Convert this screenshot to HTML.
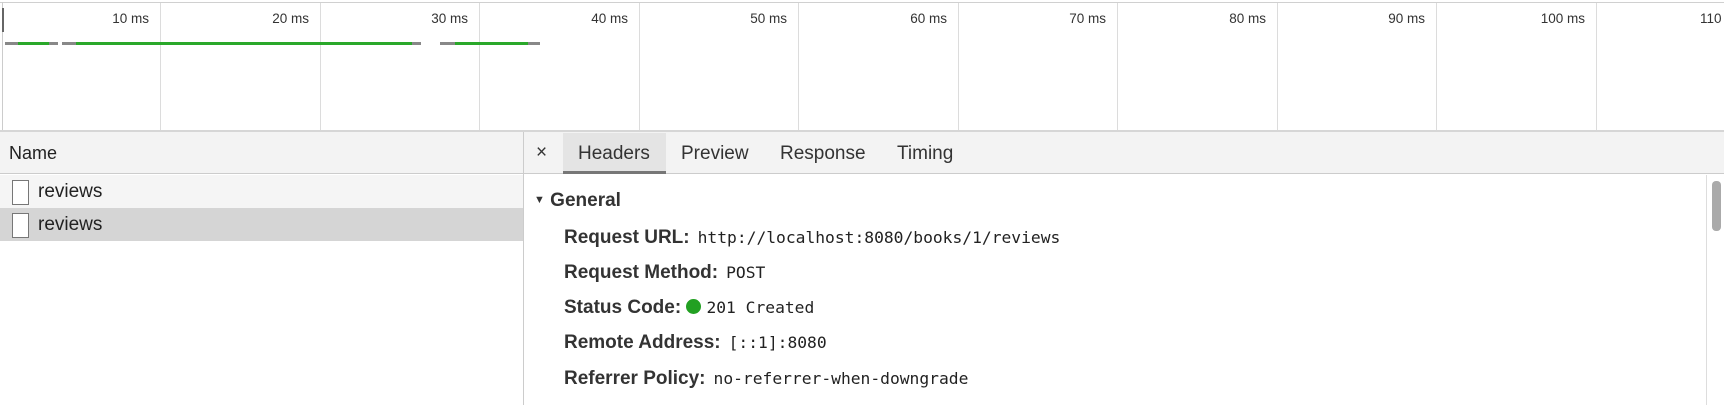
<!DOCTYPE html>
<html><head><style>
*{margin:0;padding:0;box-sizing:border-box}
body{width:1724px;height:405px;background:#fff;position:relative;overflow:hidden;font-family:"Liberation Sans",sans-serif;color:#222}
.a{position:absolute}
.vl{position:absolute;top:3px;height:127px;width:1px;background:#dcdcdc}
.tl{position:absolute;top:9px;font-size:13.5px;line-height:20px;color:#333;text-align:right;width:90px}
.lab{position:absolute;left:564px;font-size:19px;line-height:22px;font-weight:bold;color:#333;white-space:nowrap}
.val{font-family:"DejaVu Sans Mono","Liberation Mono",monospace;font-weight:normal;font-size:16.3px;margin-left:8px;color:#222}
.tab{position:absolute;top:143px;font-size:19px;line-height:22px;color:#333}
</style></head><body>
<div class="a" style="left:0;top:2px;width:1724px;height:1px;background:#d0d0d0"></div>
<div class="a" style="left:2px;top:2px;width:1px;height:129px;background:#ccc"></div>
<div class="a" style="left:2px;top:8px;width:2px;height:24px;background:#666"></div>
<div class="vl" style="left:160px"></div><div class="vl" style="left:320px"></div><div class="vl" style="left:479px"></div><div class="vl" style="left:639px"></div><div class="vl" style="left:798px"></div><div class="vl" style="left:958px"></div><div class="vl" style="left:1117px"></div><div class="vl" style="left:1277px"></div><div class="vl" style="left:1436px"></div><div class="vl" style="left:1596px"></div><div class="vl" style="left:1755px"></div>
<div class="tl" style="left:59px">10 ms</div><div class="tl" style="left:219px">20 ms</div><div class="tl" style="left:378px">30 ms</div><div class="tl" style="left:538px">40 ms</div><div class="tl" style="left:697px">50 ms</div><div class="tl" style="left:857px">60 ms</div><div class="tl" style="left:1016px">70 ms</div><div class="tl" style="left:1176px">80 ms</div><div class="tl" style="left:1335px">90 ms</div><div class="tl" style="left:1495px">100 ms</div><div class="a" style="left:1700px;top:9px;font-size:13.5px;line-height:20px;color:#333">110</div>
<div class="a" style="left:5px;top:42px;width:53px;height:3px;background:#888"></div><div class="a" style="left:18px;top:42px;width:31px;height:3px;background:#2aa82a"></div>
<div class="a" style="left:62px;top:42px;width:359px;height:3px;background:#888"></div><div class="a" style="left:76px;top:42px;width:336px;height:3px;background:#2aa82a"></div>
<div class="a" style="left:440px;top:42px;width:100px;height:3px;background:#888"></div><div class="a" style="left:455px;top:42px;width:73px;height:3px;background:#2aa82a"></div>
<div class="a" style="left:0;top:130px;width:1724px;height:2px;background:#d6d6d6"></div>
<div class="a" style="left:0;top:132px;width:1724px;height:42px;background:#f3f3f3;border-bottom:1px solid #ccc"></div>
<div class="a" style="left:9px;top:142px;font-size:18px;line-height:22px;color:#222">Name</div>
<div class="a" style="left:523px;top:132px;width:1px;height:273px;background:#ccc"></div>
<div class="a" style="left:536px;top:142px;font-size:19px;line-height:22px;color:#333">×</div>
<div class="a" style="left:563px;top:133px;width:103px;height:41px;background:#e4e4e4;border-bottom:3px solid #777"></div>
<div class="tab" style="left:578px">Headers</div><div class="tab" style="left:681px">Preview</div><div class="tab" style="left:780px">Response</div><div class="tab" style="left:897px">Timing</div>
<div class="a" style="left:0;top:175px;width:523px;height:33px;background:#f5f5f5"></div>
<div class="a" style="left:0;top:208px;width:523px;height:33px;background:#d5d5d5"></div>
<div class="a" style="left:12px;top:180px;width:17px;height:25px;border:1px solid #777;background:#fff"></div>
<div class="a" style="left:12px;top:213px;width:17px;height:25px;border:1px solid #777;background:#fff"></div>
<div class="a" style="left:38px;top:181px;font-size:19px;line-height:22px">reviews</div>
<div class="a" style="left:38px;top:214px;font-size:19px;line-height:22px">reviews</div>
<div class="a" style="left:1706px;top:175px;width:1px;height:230px;background:#ddd"></div>
<div class="a" style="left:1712px;top:181px;width:9px;height:50px;border-radius:4px;background:#aaa"></div>
<div class="a" style="left:534px;top:190px;font-size:19px;line-height:22px;font-weight:bold;color:#333"><span style="font-size:11px;position:relative;top:-3px">▼</span> General</div>
<div class="lab" style="top:227px">Request URL:<span class="val">http://localhost:8080/books/1/reviews</span></div>
<div class="lab" style="top:262px">Request Method:<span class="val">POST</span></div>
<div class="lab" style="top:297px">Status Code: <span style="display:inline-block;width:15px;height:15px;border-radius:50%;background:#22a022;vertical-align:-1px"></span><span class="val" style="margin-left:5px">201 Created</span></div>
<div class="lab" style="top:332px">Remote Address:<span class="val">[::1]:8080</span></div>
<div class="lab" style="top:368px">Referrer Policy:<span class="val">no-referrer-when-downgrade</span></div>
</body></html>
